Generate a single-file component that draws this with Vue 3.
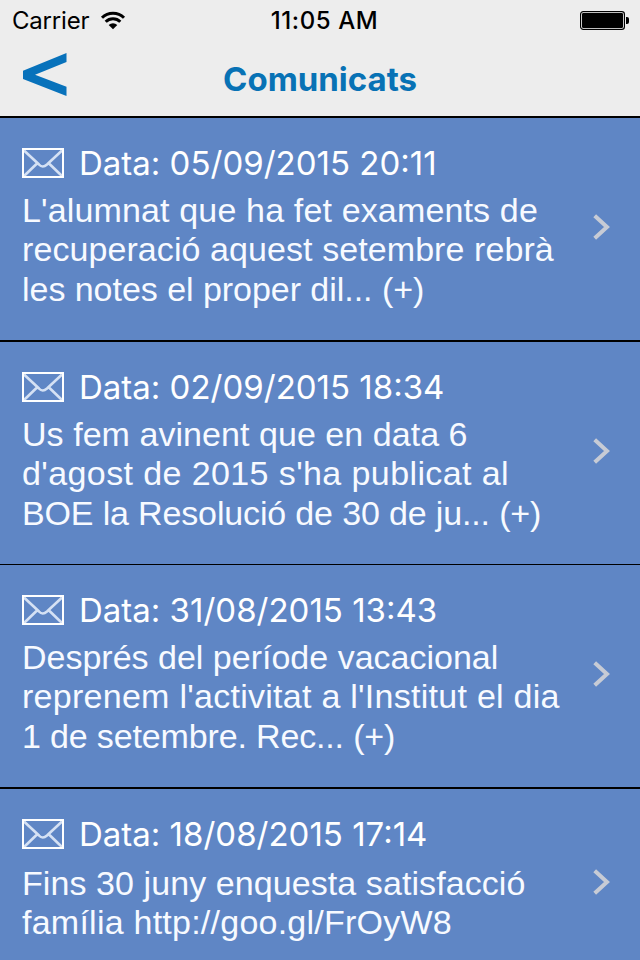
<template>
  <div class="screen">
    <header class="header">
      <div class="status-bar">
        <div class="carrier">
          <span>Carrier</span>
          <svg class="wifi" viewBox="0 0 26 19" width="26" height="19">
            <path d="M2 6.8a15.7 15.7 0 0 1 22 0" />
            <path d="M5.7 10.8a10.4 10.4 0 0 1 14.6 0" />
            <path class="dot" d="M13 18.2l-4.3-4.1a6.2 6.2 0 0 1 8.6 0z" />
          </svg>
        </div>
        <span class="clock">11:05 AM</span>
        <svg class="battery" viewBox="0 0 50 20" width="50" height="20">
          <rect class="case" x="0.6" y="0.6" width="43.8" height="17.8" rx="2.6" />
          <rect x="2" y="2" width="41" height="15" rx="1.2" />
          <path d="M46 6h1a2 2 0 0 1 2 2v3a2 2 0 0 1-2 2h-1z" />
        </svg>
      </div>
      <div class="nav-bar">
        <button class="back" type="button" aria-label="Enrere">
          <svg viewBox="0 0 44 44" width="44" height="44">
            <path d="M43.500 0v9L12 21.800l31.500 12v9.200L0 26v-8.300z" />
          </svg>
        </button>
        <h1 class="title">Comunicats</h1>
      </div>
    </header>

    <ul class="list">
      <li v-for="item in messages" :key="item.date" class="row">
        <div class="content">
          <div class="date-line">
            <svg class="envelope" viewBox="0 0 42 30" width="42" height="30">
              <path d="M2 2.500l15 14q3.500 4 8 0L40 2.500M2 28l13-12.500M40 28l-13-12.500" />
              <rect x="1" y="1" width="40" height="28" />
            </svg>
            <span class="date">Data: {{ item.date }}</span>
          </div>
          <p class="body">
            <span
              v-for="line in item.lines"
              :key="line.text"
              class="line"
              :style="{ letterSpacing: line.tracking + 'px' }"
            >{{ line.text }}</span>
          </p>
        </div>
        <svg class="chevron" viewBox="0 0 17 26" width="17" height="26">
          <path d="M1.700 1.700L14 13 1.700 24.300" />
        </svg>
      </li>
    </ul>
  </div>
</template>

<script setup>
import { ref } from 'vue'

const messages = ref([
  {
    date: '05/09/2015 20:11',
    lines: [
      { text: "L'alumnat que ha fet examents de", tracking: 0.15 },
      { text: 'recuperació aquest setembre rebrà', tracking: 0.08 },
      { text: 'les notes el proper dil... (+)', tracking: -0.04 }
    ]
  },
  {
    date: '02/09/2015 18:34',
    lines: [
      { text: 'Us fem avinent que en data 6', tracking: 0.05 },
      { text: "d'agost de 2015 s'ha publicat al", tracking: 0.4 },
      { text: 'BOE la Resolució de 30 de ju... (+)', tracking: -0.15 }
    ]
  },
  {
    date: '31/08/2015 13:43',
    lines: [
      { text: 'Després del període vacacional', tracking: 0 },
      { text: "reprenem l'activitat a l'Institut el dia", tracking: 0.27 },
      { text: '1 de setembre. Rec... (+)', tracking: -0.15 }
    ]
  },
  {
    date: '18/08/2015 17:14',
    lines: [
      { text: 'Fins 30 juny enquesta satisfacció', tracking: 0.08 },
      { text: 'família http://goo.gl/FrOyW8', tracking: 0.24 }
    ]
  }
])
</script>

<style>
body {
  margin: 0;
  overflow: hidden;
}
</style>

<style scoped>
.screen {
  width: 640px;
  height: 960px;
  overflow: hidden;
  background: #5f86c5;
  font-family: Inter, sans-serif;
}

.header {
  height: 116px;
  background: #ededed;
}

.status-bar {
  display: grid;
  grid-template-columns: 1fr auto 1fr;
  align-items: center;
  height: 40px;
  padding: 0 10px 0 12px;
  font-size: 24px;
  color: #000;
}

.carrier {
  display: flex;
  align-items: center;
  gap: 11px;
  letter-spacing: -0.2px;
}

.wifi {
  fill: none;
  stroke: #000;
  stroke-width: 3;
}

.wifi .dot {
  fill: #000;
  stroke: none;
}

.clock {
  padding-left: 7px;
  font-weight: 500;
  letter-spacing: 0.6px;
}

.battery {
  justify-self: end;
  margin-top: 2px;
}

.battery .case {
  fill: #fff;
  stroke: #000;
  stroke-width: 1.2;
}

.nav-bar {
  display: grid;
  grid-template-columns: 90px 1fr 90px;
  height: 76px;
}

.back {
  display: flex;
  align-items: flex-start;
  width: 90px;
  height: 76px;
  padding: 13px 0 0 23px;
  border: 0;
  background: none;
}

.back svg {
  display: block;
  fill: #0872bb;
}

.title {
  margin: 0;
  font-size: 33px;
  font-weight: 700;
  line-height: 78px;
  text-align: center;
  color: #0872b5;
}

.list {
  margin: 0;
  padding: 0;
  list-style: none;
}

.row {
  display: flex;
  align-items: center;
  justify-content: space-between;
  box-sizing: border-box;
  height: 224px;
  padding: 0 30px 0 22px;
  border-top: 2px solid #000;
}

.row:nth-child(3) {
  height: 223px;
  border-top-width: 1px;
}

.row:last-child {
  height: 192px;
}

.content {
  align-self: flex-start;
  padding-top: 22px;
}

.date-line {
  display: flex;
  align-items: center;
  gap: 15px;
  height: 46px;
}

.envelope {
  fill: none;
  stroke: #fff;
  stroke-width: 2;
}

.envelope path {
  stroke: #d5e1f4;
  stroke-width: 2.6;
}

.date {
  font-size: 33px;
  line-height: 46px;
  color: #fff;
  white-space: nowrap;
}

.body {
  margin: 4.5px 0 0;
  font-family: "Liberation Sans", Arial, sans-serif;
  font-size: 34px;
  line-height: 39.5px;
  color: #f7faff;
}

.row:last-child .body {
  margin-top: 6.5px;
}

.line {
  display: block;
  white-space: nowrap;
}

.chevron {
  margin-bottom: 4px;
  fill: none;
  stroke: #c7cbd5;
  stroke-width: 4;
}
</style>
